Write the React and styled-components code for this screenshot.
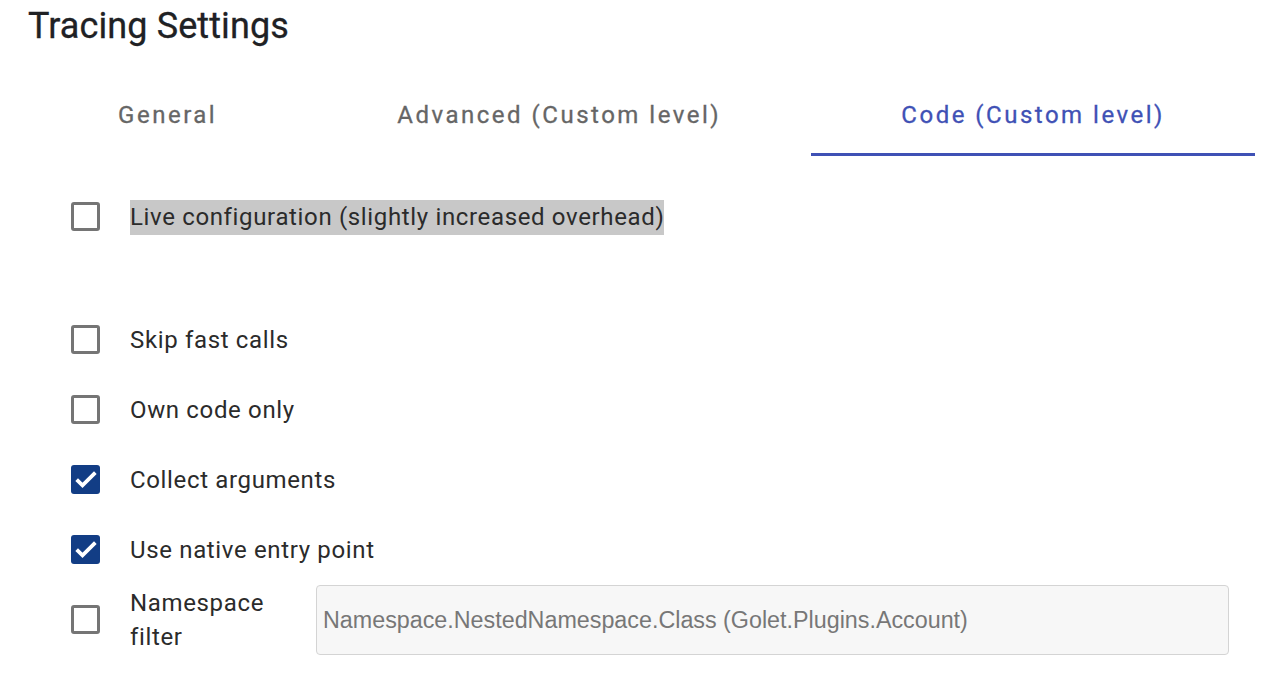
import React, { useState } from "react";
import styled, { createGlobalStyle } from "styled-components";

const GlobalStyle = createGlobalStyle`
  body {
    margin: 0;
    background: #fff;
    font-family: Roboto, "Noto Sans", sans-serif;
  }
`;

const Page = styled.div`
  padding: 0 27px 0 28px;
`;

const Title = styled.h1`
  margin: 0;
  padding-top: 5px;
  font-size: 36px;
  line-height: 42px;
  font-weight: 400;
  letter-spacing: 0.1px;
  color: #202124;
  -webkit-text-stroke: 0.3px #202124;
`;

const TabBar = styled.div`
  display: flex;
  margin-top: 25px;
`;

const Tab = styled.button`
  flex: 1 1 auto;
  height: 84px;
  padding: 4px 0 0;
  border: none;
  background: none;
  font-family: Roboto, sans-serif;
  font-size: 24px;
  font-weight: 400;
  letter-spacing: 2.5px;
  color: ${(p) => (p.$active ? "#3f51b5" : "#666")};
  -webkit-text-stroke: 0.3px ${(p) => (p.$active ? "#3f51b5" : "#666")};
  border-bottom: 3px solid ${(p) => (p.$active ? "#3f51b5" : "transparent")};
  cursor: pointer;
`;

const Options = styled.div`
  padding: 26px 26px 0 43px;
`;

const Row = styled.label`
  display: flex;
  align-items: center;
  gap: 30px;
  min-height: 70px;
  margin-bottom: ${(p) => (p.$spaced ? "53px" : "0")};
  font-size: 24px;
  letter-spacing: 0.65px;
  color: #2b2b2b;
  cursor: pointer;
`;

const Box = styled.span`
  flex: none;
  width: 29px;
  height: 29px;
  margin-top: -2px;
  box-sizing: border-box;
  border-radius: 3px;
  border: ${(p) => (p.$checked ? "none" : "3px solid #757575")};
  background: ${(p) => (p.$checked ? "#123d85" : "#fff")};
  display: flex;
  align-items: center;
  justify-content: center;
`;

const Label = styled.span`
  display: inline-block;
  line-height: 35px;
  background: ${(p) => (p.$highlight ? "#c8c8c8" : "transparent")};
`;

const FilterLabel = styled.span`
  width: 156px;
  line-height: 34px;
`;

const FilterInput = styled.input`
  flex: 1;
  height: 70px;
  box-sizing: border-box;
  border: 1px solid #d4d4d4;
  border-radius: 4px;
  background: #f7f7f7;
  padding: 0 6px;
  font-family: "Liberation Sans", Arial, sans-serif;
  font-size: 23.3px;
  letter-spacing: 0;
  color: #333;
  &::placeholder {
    color: #777;
  }
`;

function Check({ checked }) {
  return (
    <Box $checked={checked}>
      {checked && (
        <svg width="28" height="28" viewBox="0 0 24 24">
          <path d="M4 12.5l5 5L20 6.5" fill="none" stroke="#fff" strokeWidth="3.2" />
        </svg>
      )}
    </Box>
  );
}

const items = [
  { id: "skip", text: "Skip fast calls", checked: false },
  { id: "own", text: "Own code only", checked: false },
  { id: "args", text: "Collect arguments", checked: true },
  { id: "native", text: "Use native entry point", checked: true },
];

export default function App() {
  const [tab, setTab] = useState(2);
  const tabs = ["General", "Advanced (Custom level)", "Code (Custom level)"];
  return (
    <Page>
      <GlobalStyle />
      <Title>Tracing Settings</Title>
      <TabBar>
        {tabs.map((t, i) => (
          <Tab key={t} $active={tab === i} onClick={() => setTab(i)}>
            {t}
          </Tab>
        ))}
      </TabBar>
      <Options>
        <Row $spaced>
          <Check checked={false} />
          <Label $highlight>Live configuration (slightly increased overhead)</Label>
        </Row>
        {items.map((it) => (
          <Row key={it.id}>
            <Check checked={it.checked} />
            <Label>{it.text}</Label>
          </Row>
        ))}
        <Row>
          <Check checked={false} />
          <FilterLabel>Namespace filter</FilterLabel>
          <FilterInput placeholder="Namespace.NestedNamespace.Class (Golet.Plugins.Account)" />
        </Row>
      </Options>
    </Page>
  );
}
